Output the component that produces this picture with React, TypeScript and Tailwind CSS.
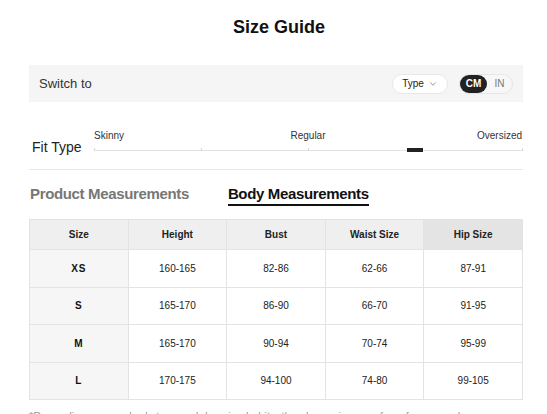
import { ChevronDown } from "lucide-react";

const rows = [
  { size: "XS", height: "160-165", bust: "82-86", waist: "62-66", hip: "87-91" },
  { size: "S", height: "165-170", bust: "86-90", waist: "66-70", hip: "91-95" },
  { size: "M", height: "165-170", bust: "90-94", waist: "70-74", hip: "95-99" },
  { size: "L", height: "170-175", bust: "94-100", waist: "74-80", hip: "99-105" },
];

export default function App() {
  return (
    <div className="w-[547px] h-[414px] overflow-hidden bg-white font-['Liberation_Sans',Arial,sans-serif] text-[#222]">
      <div className="ml-[29px] w-[494px]">
        {/* Title */}
        <h1 className="pt-[15px] pl-[6px] text-center text-[18px] leading-[24px] font-bold text-[#111]">
          Size Guide
        </h1>

        {/* Switch bar */}
        <div className="mt-[26px] h-[37px] bg-[#f5f5f5] flex items-center pl-[10px] pr-[10px]">
          <span className="text-[13px] text-[#333]">Switch to</span>
          <div className="ml-auto flex items-center gap-[11px]">
            <div className="w-[56px] h-[20px] rounded-full bg-white border border-[#e8e8e8] flex items-center justify-center gap-[4px] text-[10px] text-[#222]">
              Type
              <ChevronDown className="w-[10px] h-[10px] text-[#555]" strokeWidth={1.5} />
            </div>
            <div className="w-[54px] h-[20px] rounded-full bg-[#f7f7f7] border border-[#e6e6e6] flex items-center">
              <div className="w-[27px] h-[18px] rounded-full bg-[#222] text-white text-[10px] font-bold flex items-center justify-center">
                CM
              </div>
              <span className="flex-1 text-center text-[10px] text-[#777]">IN</span>
            </div>
          </div>
        </div>

        {/* Fit type */}
        <div className="mt-[28px] flex items-start">
          <div className="w-[65px] pl-[3px] mt-[9px] text-[14px] leading-[16px] text-[#222]">Fit Type</div>
          <div className="flex-1 pr-[1px]">
            <div className="grid grid-cols-3 text-[10px] leading-[12px] text-[#333]">
              <span className="text-left">Skinny</span>
              <span className="text-center">Regular</span>
              <span className="text-right">Oversized</span>
            </div>
            <div className="relative mt-[8px] h-px bg-[#e3e3e3]">
              {["0%", "25%", "50%", "75%", "100%"].map((l) => (
                <span key={l} className="absolute top-[-2px] w-px h-[3px] bg-[#d6d6d6]" style={{ left: l }} />
              ))}
              <span className="absolute top-[-2px] left-[75%] -translate-x-1/2 w-[16px] h-[4px] bg-[#222]" />
            </div>
          </div>
        </div>

        <div className="mt-[14px] h-px bg-[#e6e6e6]" />

        {/* Tabs */}
        <div className="pt-[15px] flex items-start gap-[39px] text-[15px] leading-[18px] font-bold tracking-[-0.35px]">
          <span className="pl-[1px] text-[#777]">Product Measurements</span>
          <span className="text-[#111] pb-[1px] border-b-2 border-[#111]">Body Measurements</span>
        </div>

        {/* Table */}
        <table className="mt-[13px] w-full table-fixed border-collapse text-[10px] text-[#222]">
          <thead>
            <tr className="h-[30px]">
              {["Size", "Height", "Bust", "Waist Size", "Hip Size"].map((h, i) => (
                <th
                  key={h}
                  className={`border border-[#e3e3e3] font-bold ${i === 4 ? "bg-[#e4e4e4]" : "bg-[#efefef]"}`}
                >
                  {h}
                </th>
              ))}
            </tr>
          </thead>
          <tbody>
            {rows.map((r) => (
              <tr key={r.size} className="h-[37.5px]">
                <td className="border border-[#e3e3e3] bg-[#f6f6f6] text-center font-bold tracking-[1px] text-[#111]">
                  {r.size}
                </td>
                <td className="border border-[#e3e3e3] text-center">{r.height}</td>
                <td className="border border-[#e3e3e3] text-center">{r.bust}</td>
                <td className="border border-[#e3e3e3] text-center">{r.waist}</td>
                <td className="border border-[#e3e3e3] text-center">{r.hip}</td>
              </tr>
            ))}
          </tbody>
        </table>

        <p className="mt-[9px] text-[11px] leading-[14px] text-[#999]">
          *Depending on your body type and dressing habits, the above sizes are for reference only.
        </p>
      </div>
    </div>
  );
}
